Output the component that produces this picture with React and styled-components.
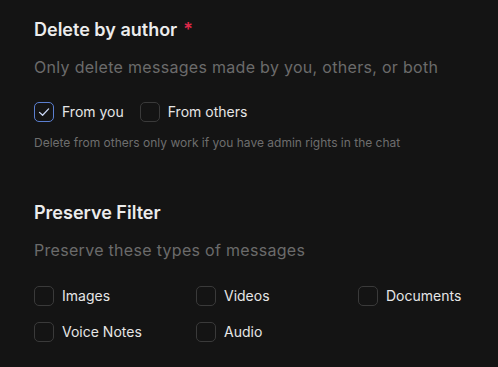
import React from "react";
import styled, { createGlobalStyle } from "styled-components";

const Global = createGlobalStyle`
  html, body { margin: 0; padding: 0; background: #141414; }
  body { font-family: Inter, "Noto Sans", sans-serif; color: #ececec; }
`;

const Page = styled.div`
  width: 498px;
  height: 367px;
  box-sizing: border-box;
  padding: 18px 34px 0;
  background: #141414;
  overflow: hidden;
`;

const Section = styled.section`
  margin-bottom: ${(p) => p.$gap || 0}px;
`;

const Title = styled.h2`
  margin: 0;
  font-size: 18px;
  font-weight: 600;
  line-height: 24px;
  color: #ececec;
`;

const Required = styled.span`
  color: #e0294a;
  margin-left: 6px;
`;

const Subtitle = styled.p`
  margin: 13px 0 0;
  font-size: 16px;
  font-weight: 400;
  line-height: 24px;
  letter-spacing: 0.3px;
  color: #6b6b6b;
`;

const Row = styled.div`
  display: flex;
  gap: 16px;
  margin-top: 23px;
`;

const Grid = styled.div`
  display: grid;
  grid-template-columns: repeat(3, 162px);
  row-gap: 16px;
  margin-top: 24px;
`;

const Option = styled.label`
  display: flex;
  align-items: center;
  gap: 8px;
  font-size: 14px;
  line-height: 20px;
  color: #e6e6e6;
  cursor: pointer;
`;

const Box = styled.span`
  width: 20px;
  height: 20px;
  box-sizing: border-box;
  border-radius: 5px;
  border: 1px solid ${(p) => (p.$checked ? "#5b7fd0" : "#3a3a3a")};
  display: flex;
  align-items: center;
  justify-content: center;
  flex-shrink: 0;
`;

const Note = styled.p`
  margin: 13px 0 0;
  font-size: 12px;
  line-height: 16px;
  color: #6e6e6e;
`;

const Check = ({ checked, label }) => (
  <Option>
    <Box $checked={checked}>
      {checked && (
        <svg width="14" height="14" viewBox="0 0 14 14" fill="none">
          <path d="M2.5 7.4 L5.6 10.3 L11.6 3.9" stroke="#c9d6f5" strokeWidth="1.3" strokeLinecap="round" strokeLinejoin="round" />
        </svg>
      )}
    </Box>
    {label}
  </Option>
);

export default function App() {
  return (
    <>
      <Global />
      <Page>
        <Section $gap={50}>
          <Title>
            Delete by author<Required>*</Required>
          </Title>
          <Subtitle>Only delete messages made by you, others, or both</Subtitle>
          <Row>
            <Check checked label="From you" />
            <Check label="From others" />
          </Row>
          <Note>Delete from others only work if you have admin rights in the chat</Note>
        </Section>
        <Section>
          <Title>Preserve Filter</Title>
          <Subtitle>Preserve these types of messages</Subtitle>
          <Grid>
            <Check label="Images" />
            <Check label="Videos" />
            <Check label="Documents" />
            <Check label="Voice Notes" />
            <Check label="Audio" />
          </Grid>
        </Section>
      </Page>
    </>
  );
}
